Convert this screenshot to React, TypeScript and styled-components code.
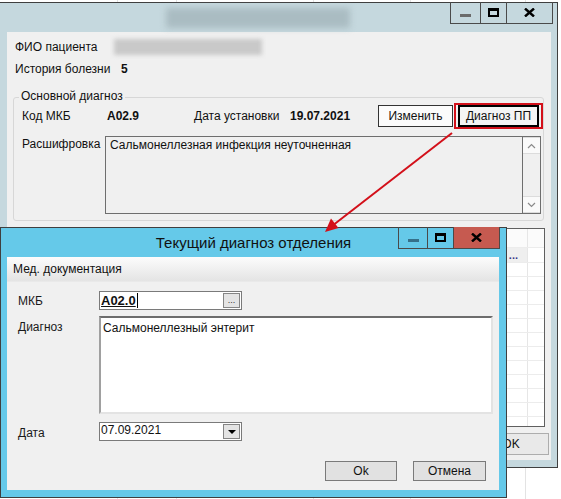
import React from "react";
import styled, { createGlobalStyle } from "styled-components";

const GlobalStyle = createGlobalStyle`
  html, body {
    margin: 0;
    padding: 0;
    background: #fff;
  }
  body {
    font-family: "Liberation Sans", Arial, sans-serif;
    font-size: 12px;
    color: #111;
  }
  * {
    box-sizing: border-box;
  }
`;

const gridLine = "#e3e3e3";

const Desktop = styled.div`
  position: relative;
  width: 561px;
  height: 499px;
  overflow: hidden;
  background-color: #fff;
  background-image: linear-gradient(
    to right,
    transparent 117px, ${gridLine} 117px, ${gridLine} 118px, transparent 118px,
    transparent 176px, ${gridLine} 176px, ${gridLine} 177px, transparent 177px,
    transparent 313px, ${gridLine} 313px, ${gridLine} 314px, transparent 314px,
    transparent 410px, ${gridLine} 410px, ${gridLine} 411px, transparent 411px,
    transparent 525px, ${gridLine} 525px, ${gridLine} 526px, transparent 526px
  );
`;

// ---------- window chrome ----------

const Window = styled.div<{ $left: number; $top: number; $width: number; $height: number; $frame: string }>`
  position: absolute;
  left: ${(p) => p.$left}px;
  top: ${(p) => p.$top}px;
  width: ${(p) => p.$width}px;
  height: ${(p) => p.$height}px;
  display: flex;
  flex-direction: column;
  background: ${(p) => p.$frame};
  border: 1px solid #3f3f3f;
`;

const TitleBar = styled.div`
  position: relative;
  height: 29px;
  flex-shrink: 0;
  display: flex;
  align-items: flex-start;
`;

const BlurredTitle = styled.div`
  margin: 5px 0 0 166px;
  width: 184px;
  height: 20px;
  background: #aabcc2;
  filter: blur(3px);
`;

const DialogTitle = styled.div`
  flex: 1;
  text-align: center;
  line-height: 29px;
  font-size: 15px;
  color: #111;
`;

const CaptionGroup = styled.div<{ $right: number }>`
  position: absolute;
  top: -1px;
  right: ${(p) => p.$right}px;
  display: flex;
  height: 22px;
  border: 1px solid #4a4a4a;
  border-top: none;
`;

const CaptionButton = styled.div<{ $width: number; $bg?: string }>`
  width: ${(p) => p.$width}px;
  height: 100%;
  display: flex;
  align-items: center;
  justify-content: center;
  background: ${(p) => p.$bg || "transparent"};
  & + & {
    border-left: 1px solid #4a4a4a;
  }
`;

const MinBar = styled.div<{ $color: string }>`
  width: 11px;
  height: 3px;
  margin-top: 6px;
  background: ${(p) => p.$color};
`;

const MaxBox = styled.div`
  width: 11px;
  height: 9px;
  border: 2px solid #000;
  border-top-width: 3px;
`;

const CloseIcon = () => (
  <svg width="11" height="9" viewBox="0 0 11 9">
    <path d="M1 0.5 L10 8.5 M10 0.5 L1 8.5" stroke="#000" strokeWidth="2.4" />
  </svg>
);

const Caption = ({ right, dialog }: { right: number; dialog?: boolean }) => (
  <CaptionGroup $right={right}>
    <CaptionButton $width={dialog ? 28 : 29}>
      <MinBar $color={dialog ? "#35708a" : "#6b6b6b"} />
    </CaptionButton>
    <CaptionButton $width={26}>
      <MaxBox />
    </CaptionButton>
    <CaptionButton $width={46} $bg={dialog ? "#c65a50" : undefined}>
      <CloseIcon />
    </CaptionButton>
  </CaptionGroup>
);

const Client = styled.div<{ $ml: number; $mr: number }>`
  flex: 1;
  margin: 0 ${(p) => p.$mr}px 7px ${(p) => p.$ml}px;
  background: #f0f0f0;
  display: flex;
  flex-direction: column;
`;

// ---------- back window content ----------

const InfoRow = styled.div<{ $mt: number }>`
  display: flex;
  align-items: center;
  height: 18px;
  margin-top: ${(p) => p.$mt}px;
  padding-left: 8px;
`;

const InfoLabel = styled.div<{ $width: number }>`
  width: ${(p) => p.$width}px;
  flex-shrink: 0;
`;

const BlurredName = styled.div`
  width: 148px;
  height: 16px;
  background: #c9c9c9;
  filter: blur(2px);
`;

const Bold = styled.div<{ $width?: number }>`
  font-weight: bold;
  ${(p) => (p.$width ? `width: ${p.$width}px; flex-shrink: 0;` : "flex: 1;")}
`;

const GroupBox = styled.div`
  position: relative;
  height: 124px;
  margin: 19px 7px 0 6px;
  padding: 5px 0 0 8px;
  border: 1px solid #d7d7d7;
  border-radius: 3px;
`;

const GroupTitle = styled.span`
  position: absolute;
  top: -10px;
  left: 5px;
  padding: 0 2px;
  line-height: 16px;
  background: #f0f0f0;
`;

const GroupRow = styled.div`
  display: flex;
  align-items: center;
  height: 26px;
`;

const EditButton = styled.div`
  width: 75px;
  height: 22px;
  margin-right: 1px;
  display: flex;
  align-items: center;
  justify-content: center;
  background: #fbfbfb;
  border: 1px solid #333;
`;

const Highlight = styled.div`
  width: 89px;
  height: 26px;
  display: flex;
  align-items: center;
  justify-content: center;
  border: 2px solid #d3101a;
`;

const DefaultButton = styled.div`
  width: 81px;
  height: 22px;
  display: flex;
  align-items: center;
  justify-content: center;
  background: #f4f4f4;
  border: 2px solid #000;
`;

const DecodeRow = styled.div`
  display: flex;
  margin-top: 7px;
`;

const DecodeLabel = styled.div`
  width: 83px;
  padding-top: 1px;
  flex-shrink: 0;
`;

const ReadOnlyBox = styled.div`
  width: 436px;
  height: 78px;
  flex-shrink: 0;
  display: flex;
`;

const ReadOnlyText = styled.div`
  flex: 1;
  padding: 1px 4px;
  border: 1px solid #6e6e6e;
  border-right: none;
  background: #f0f0f0;
`;

const ScrollBar = styled.div`
  width: 19px;
  display: flex;
  flex-direction: column;
  justify-content: space-between;
  border: 1px solid #6e6e6e;
  background: #f0f0f0;
`;

const ScrollArrow = styled.div`
  height: 17px;
  display: flex;
  align-items: center;
  justify-content: center;
  background: #fafafa;
  border-top: 1px solid #dcdcdc;
  border-bottom: 1px solid #dcdcdc;
`;

const Chevron = ({ up }: { up?: boolean }) => (
  <svg width="9" height="6" viewBox="0 0 9 6">
    <polyline
      points={up ? "1,5 4.5,1.5 8,5" : "1,1 4.5,4.5 8,1"}
      fill="none"
      stroke="#8a8a8a"
      strokeWidth="1.2"
    />
  </svg>
);

const DataGrid = styled.div`
  height: 199px;
  margin: 7px 6px 0 6px;
  border: 1px solid #5f5f5f;
  background: #fff;
  overflow: hidden;
`;

const GridRow = styled.div<{ $height: number }>`
  display: flex;
  height: ${(p) => p.$height}px;
  border-bottom: 1px solid #ececec;
`;

const GridCell = styled.div<{ $bg?: string; $narrow?: boolean }>`
  ${(p) => (p.$narrow ? "width: 17px; flex-shrink: 0;" : "flex: 1;")}
  background: ${(p) => p.$bg || "#fff"};
  border-left: ${(p) => (p.$narrow ? "1px solid #e6e6e6" : "none")};
  display: flex;
  align-items: flex-end;
  justify-content: flex-end;
  padding: 0 9px 3px 0;
  font-size: 11px;
  line-height: 8px;
  font-weight: bold;
  color: #3b3b8a;
`;

const FooterRow = styled.div`
  display: flex;
  justify-content: flex-end;
  margin: 6px 2px 0 0;
`;

const PlainButton = styled.div<{ $width: number; $height: number }>`
  width: ${(p) => p.$width}px;
  height: ${(p) => p.$height}px;
  display: flex;
  align-items: center;
  justify-content: center;
  background: #e1e1e1;
  border: 1px solid #7a7a7a;
`;

const BackOkButton = styled(PlainButton)`
  background: #e9e9e9;
  border-color: #adadad;
`;

// ---------- dialog content ----------

const PanelHeader = styled.div`
  height: 25px;
  line-height: 25px;
  padding-left: 6px;
  flex-shrink: 0;
  background: linear-gradient(#fcfcfc, #e4e4e4);
  border-bottom: 1px solid #e9e9e9;
`;

const Form = styled.div`
  display: flex;
  flex-direction: column;
  padding-left: 11px;
`;

const FormRow = styled.div<{ $mt: number }>`
  display: flex;
  align-items: flex-start;
  margin-top: ${(p) => p.$mt}px;
`;

const FormLabel = styled.div<{ $pt: number }>`
  width: 81px;
  flex-shrink: 0;
  padding-top: ${(p) => p.$pt}px;
  color: #1a1a1a;
`;

const Field = styled.div`
  width: 143px;
  height: 19px;
  flex-shrink: 0;
  display: flex;
  align-items: center;
  justify-content: space-between;
  padding: 0 1px;
  background: #fff;
  border: 1px solid #7a7a7a;
`;

const CodeValue = styled.span`
  font-weight: bold;
  font-size: 13px;
  text-decoration: underline;
  border-right: 1px solid #000;
  line-height: 15px;
  padding-right: 1px;
`;

const DateValue = styled.span`
  align-self: flex-start;
  line-height: 14px;
`;

const FieldButton = styled.div`
  width: 17px;
  height: 15px;
  display: flex;
  align-items: center;
  justify-content: center;
  background: #e4e4e4;
  border: 1px solid #858585;
  font-size: 9px;
  line-height: 9px;
  color: #333;
`;

const DropTriangle = styled.div`
  width: 0;
  height: 0;
  border-left: 4px solid transparent;
  border-right: 4px solid transparent;
  border-top: 4px solid #000;
`;

const MemoBox = styled.div`
  width: 394px;
  height: 98px;
  flex-shrink: 0;
  padding: 3px 2px;
  background: #fff;
  border-top: 2px solid #6d6d6d;
  border-left: 2px solid #a0a0a0;
  border-right: 2px solid #e3e3e3;
  border-bottom: 2px solid #e3e3e3;
`;

const ButtonRow = styled.div`
  display: flex;
  justify-content: flex-end;
  gap: 16px;
  margin-top: 20px;
  padding-right: 13px;
`;

const Overlay = styled.svg`
  position: absolute;
  left: 0;
  top: 0;
  pointer-events: none;
`;

const gridRows = Array.from({ length: 12 });

const App = () => {
  return (
    <>
      <GlobalStyle />
      <Desktop>
        <Window $left={-1} $top={2} $width={559} $height={466} $frame="#c5d8de">
          <TitleBar>
            <BlurredTitle />
            <Caption right={4} />
          </TitleBar>
          <Client $ml={7} $mr={6}>
            <InfoRow $mt={6}>
              <InfoLabel $width={99}>ФИО пациента</InfoLabel>
              <BlurredName />
            </InfoRow>
            <InfoRow $mt={4}>
              <InfoLabel $width={106}>История болезни</InfoLabel>
              <Bold>5</Bold>
            </InfoRow>
            <GroupBox>
              <GroupTitle>Основной диагноз</GroupTitle>
              <GroupRow>
                <InfoLabel $width={85}>Код МКБ</InfoLabel>
                <Bold $width={87}>A02.9</Bold>
                <InfoLabel $width={96}>Дата установки</InfoLabel>
                <Bold>19.07.2021</Bold>
                <EditButton>Изменить</EditButton>
                <Highlight>
                  <DefaultButton>Диагноз ПП</DefaultButton>
                </Highlight>
              </GroupRow>
              <DecodeRow>
                <DecodeLabel>Расшифровка</DecodeLabel>
                <ReadOnlyBox>
                  <ReadOnlyText>Сальмонеллезная инфекция неуточненная</ReadOnlyText>
                  <ScrollBar>
                    <ScrollArrow>
                      <Chevron up />
                    </ScrollArrow>
                    <ScrollArrow>
                      <Chevron />
                    </ScrollArrow>
                  </ScrollBar>
                </ReadOnlyBox>
              </DecodeRow>
            </GroupBox>
            <DataGrid>
              <GridRow $height={19}>
                <GridCell $bg="#fbfbfb" />
                <GridCell $narrow $bg="#fbfbfb" />
              </GridRow>
              <GridRow $height={15}>
                <GridCell $bg="#efefef">...</GridCell>
                <GridCell $narrow />
              </GridRow>
              {gridRows.map((_, i) => (
                <GridRow key={i} $height={14}>
                  <GridCell />
                  <GridCell $narrow />
                </GridRow>
              ))}
            </DataGrid>
            <FooterRow>
              <BackOkButton $width={76} $height={22}>OK</BackOkButton>
            </FooterRow>
          </Client>
        </Window>

        <Window $left={0} $top={227} $width={507} $height={271} $frame="#65c9e9">
          <TitleBar>
            <DialogTitle>Текущий диагноз отделения</DialogTitle>
            <Caption right={6} dialog />
          </TitleBar>
          <Client $ml={6} $mr={7}>
            <PanelHeader>Мед. документация</PanelHeader>
            <Form>
              <FormRow $mt={9}>
                <FormLabel $pt={3}>МКБ</FormLabel>
                <Field>
                  <CodeValue>A02.0</CodeValue>
                  <FieldButton>...</FieldButton>
                </Field>
              </FormRow>
              <FormRow $mt={6}>
                <FormLabel $pt={4}>Диагноз</FormLabel>
                <MemoBox>Сальмонеллезный энтерит</MemoBox>
              </FormRow>
              <FormRow $mt={8}>
                <FormLabel $pt={4}>Дата</FormLabel>
                <Field>
                  <DateValue>07.09.2021</DateValue>
                  <FieldButton>
                    <DropTriangle />
                  </FieldButton>
                </Field>
              </FormRow>
              <ButtonRow>
                <PlainButton $width={72} $height={20}>Ok</PlainButton>
                <PlainButton $width={73} $height={20}>Отмена</PlainButton>
              </ButtonRow>
            </Form>
          </Client>
        </Window>

        <Overlay width={561} height={499} viewBox="0 0 561 499">
          <line x1="452" y1="133" x2="332" y2="226" stroke="#d3101a" strokeWidth="2" />
          <polygon points="325,232 338.5,228 331,218.5" fill="#d3101a" />
        </Overlay>
      </Desktop>
    </>
  );
};

export default App;
